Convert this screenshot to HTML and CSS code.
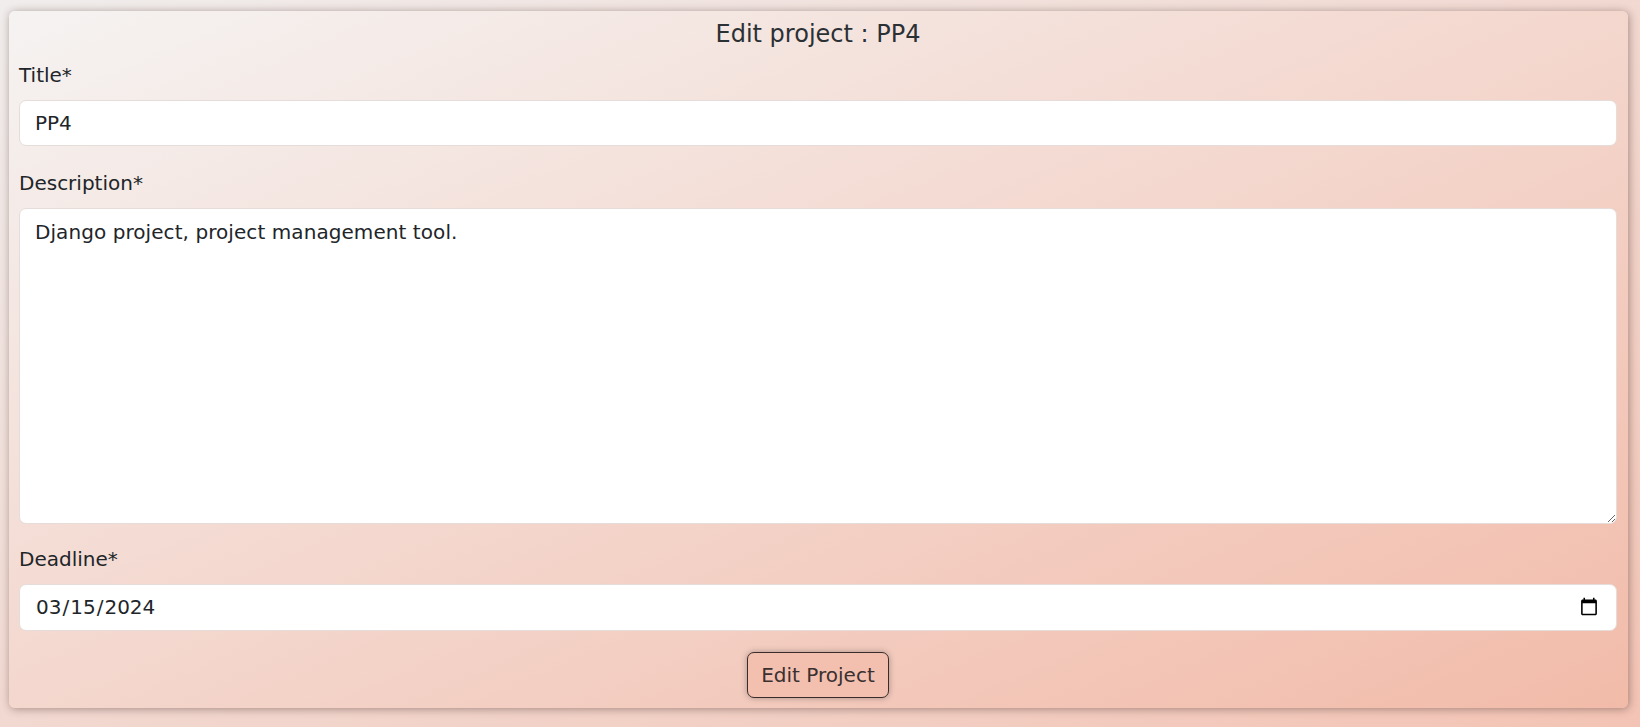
FILE: index.html
```html
<!DOCTYPE html>
<html lang="en">

<head>
    <title>Edit project : PP4</title>
    <meta charset="utf-8" />
    <link rel="stylesheet" href="styles.css">
</head>
<body>

    <main class="card">
        <h2 class="cardTitle">Edit project : PP4</h2>

        <form class="projectForm" method="post" onsubmit="return false;">
            <div class="field">
                <label for="id_title">Title*</label>
                <input type="text" id="id_title" name="title" value="PP4" />
            </div>

            <div class="field">
                <label for="id_description">Description*</label>
                <textarea id="id_description" name="description">Django project, project management tool.</textarea>
            </div>

            <div class="field">
                <label for="id_deadline">Deadline*</label>
                <input type="date" id="id_deadline" name="deadline" value="2024-03-15" />
            </div>

            <div class="actions">
                <button type="submit" class="editBtn">Edit Project</button>
            </div>
        </form>
    </main>

</body>
</html>
```

FILE: styles.css
```css
html {
    height: 100%;
}

body {
    margin: 0;
    min-height: 100%;
    box-sizing: border-box;
    padding: 11px 12px 20px 9px;
    background: linear-gradient(to bottom right, #f0edec, #f3c4b5);
    font-family: 'DejaVu Sans', sans-serif;
    font-size: 20px;
    color: #212529;
}

.card {
    border-radius: 6px;
    padding: 9px 11px 10px 10px;
    background: linear-gradient(to bottom right, #f5f3f2, #f2bba9);
    box-shadow: 1px 1px 8px rgba(70, 45, 40, 0.45);
}

.cardTitle {
    margin: 0 0 11px 0;
    font-size: 24px;
    font-weight: normal;
    line-height: 1.2;
    text-align: center;
    color: #2b3035;
}

.field {
    margin-bottom: 22px;
}

.field:nth-child(2) {
    margin-bottom: 20px;
}

.field:nth-child(3) {
    margin-bottom: 21px;
}

.field label {
    display: block;
    margin-bottom: 10px;
    line-height: 1.5;
}

.field input,
.field textarea {
    display: block;
    width: 100%;
    box-sizing: border-box;
    height: 46px;
    margin: 0;
    padding: 7px 15px;
    font-family: inherit;
    font-size: 20px;
    line-height: 1.5;
    color: #212529;
    background-color: #FFFFFF;
    border: 1px solid #e6dcd9;
    border-radius: 7px;
    outline: none;
}

.field input[type="date"] {
    height: 47px;
}

.field textarea {
    height: 316px;
    padding-top: 8px;
    letter-spacing: 0.07px;
    resize: vertical;
}

.actions {
    display: flex;
    justify-content: center;
}

.editBtn {
    padding: 7px 13px;
    font-family: inherit;
    font-size: 20px;
    line-height: 1.5;
    color: #3a3030;
    background-color: #f3c0b0;
    border: 1px solid #3a2c2a;
    border-radius: 7px;
    box-shadow: 0 0 6px rgba(0, 0, 0, 0.3);
    cursor: pointer;
}
```
